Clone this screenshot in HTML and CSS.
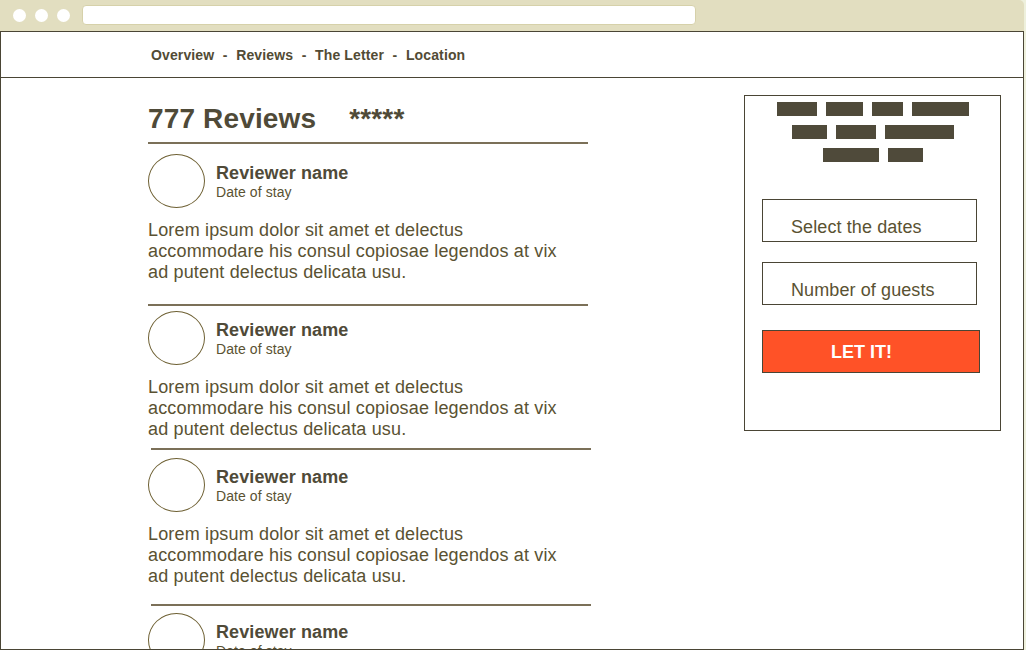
FILE: index.html
```html
<!DOCTYPE html>
<html lang="en">
<head>
<meta charset="utf-8">
<title>Reviews</title>
<link rel="stylesheet" href="styles.css">
</head>
<body>
<div class="window">
  <div class="chrome">
    <span class="dot"></span>
    <span class="dot"></span>
    <span class="dot"></span>
    <div class="url"></div>
  </div>
  <div class="frame">
    <nav class="nav">
      <span class="nav-item">Overview</span><span class="sep">-</span><span class="nav-item">Reviews</span><span class="sep">-</span><span class="nav-item">The Letter</span><span class="sep">-</span><span class="nav-item">Location</span>
    </nav>
    <div class="main">
      <section class="reviews">
        <h1 class="title">777 Reviews<span class="stars">*****</span></h1>

        <article class="review review-1">
          <div class="review-head">
            <div class="avatar"></div>
            <div class="who">
              <div class="name">Reviewer name</div>
              <div class="date">Date of stay</div>
            </div>
          </div>
          <p class="review-text">Lorem ipsum dolor sit amet et delectus accommodare his consul copiosae legendos at vix ad putent delectus delicata usu.</p>
          <hr class="divider">
        </article>

        <article class="review review-2">
          <div class="review-head">
            <div class="avatar"></div>
            <div class="who">
              <div class="name">Reviewer name</div>
              <div class="date">Date of stay</div>
            </div>
          </div>
          <p class="review-text">Lorem ipsum dolor sit amet et delectus accommodare his consul copiosae legendos at vix ad putent delectus delicata usu.</p>
          <hr class="divider divider-shift">
        </article>

        <article class="review review-3">
          <div class="review-head">
            <div class="avatar"></div>
            <div class="who">
              <div class="name">Reviewer name</div>
              <div class="date">Date of stay</div>
            </div>
          </div>
          <p class="review-text">Lorem ipsum dolor sit amet et delectus accommodare his consul copiosae legendos at vix ad putent delectus delicata usu.</p>
          <hr class="divider divider-shift">
        </article>

        <article class="review review-4">
          <div class="review-head">
            <div class="avatar"></div>
            <div class="who">
              <div class="name">Reviewer name</div>
              <div class="date">Date of stay</div>
            </div>
          </div>
          <p class="review-text">Lorem ipsum dolor sit amet et delectus accommodare his consul copiosae legendos at vix ad putent delectus delicata usu.</p>
        </article>
      </section>

      <aside class="booking">
        <div class="bars">
          <div class="bar-row"><span class="bar w40"></span><span class="bar w37"></span><span class="bar w31"></span><span class="bar w57"></span></div>
          <div class="bar-row"><span class="bar w35"></span><span class="bar w40"></span><span class="bar w69"></span></div>
          <div class="bar-row"><span class="bar w56"></span><span class="bar w35"></span></div>
        </div>
        <div class="field field-dates">Select the dates</div>
        <div class="field field-guests">Number of guests</div>
        <div class="cta">LET IT!</div>
      </aside>
    </div>
  </div>
</div>
</body>
</html>
```

FILE: styles.css
```css
* {
  box-sizing: border-box;
}

html, body {
  margin: 0;
  padding: 0;
}

body {
  background: #eef0dc;
  font-family: "Liberation Sans", Arial, sans-serif;
  width: 1026px;
  height: 650px;
  overflow: hidden;
}

.window {
  width: 1024px;
}

.chrome {
  height: 31px;
  background: #e2dec0;
  border-top-right-radius: 5px;
  display: flex;
  align-items: center;
  padding-left: 13px;
  gap: 9px;
}

.dot {
  width: 13px;
  height: 13px;
  border-radius: 50%;
  background: #ffffff;
  flex: none;
}

.url {
  width: 614px;
  height: 20px;
  margin-left: 3px;
  margin-top: -1px;
  background: #ffffff;
  border: 1px solid #d6d1aa;
  border-radius: 4px;
}

.frame {
  height: 619px;
  background: #ffffff;
  border: 1px solid #4a4535;
  overflow: hidden;
}

.nav {
  height: 46px;
  border-bottom: 1px solid #4a4535;
  display: flex;
  align-items: center;
  padding-left: 150px;
  padding-top: 1px;
  font-size: 14px;
  font-weight: bold;
  color: #524b35;
  line-height: 16px;
  letter-spacing: 0.12px;
}

.sep {
  padding: 0 8.6px;
}

.main {
  display: flex;
  align-items: flex-start;
  padding-left: 147px;
}

.reviews {
  width: 440px;
  flex: none;
}

.title {
  margin: 25px 0 0;
  padding-bottom: 7px;
  border-bottom: 2px solid #7b7058;
  font-size: 28px;
  line-height: 32px;
  font-weight: bold;
  color: #4f4a38;
  letter-spacing: 0.15px;
}

.stars {
  margin-left: 33px;
}

.review-head {
  display: flex;
  align-items: center;
  gap: 11px;
}

.avatar {
  width: 57px;
  height: 54px;
  border: 1px solid #6e6033;
  border-radius: 50%;
  flex: none;
}

.who {
  display: flex;
  flex-direction: column;
}

.name {
  font-size: 18px;
  line-height: 21px;
  font-weight: bold;
  color: #4f4a38;
  letter-spacing: 0.1px;
  position: relative;
  top: 1px;
}

.date {
  font-size: 14px;
  line-height: 18px;
  color: #5a5232;
  letter-spacing: 0.08px;
}

.review-text {
  margin: 12px 0 0;
  width: 422px;
  font-size: 18px;
  line-height: 21px;
  color: #5a5232;
  letter-spacing: 0.16px;
}

.divider {
  margin: 0;
  border: 0;
  height: 2px;
  width: 440px;
  background: #7b7058;
}

.divider-shift {
  margin-left: 3px;
}

.review-1 { padding-top: 10px; }
.review-1 .divider { margin-top: 21px; }

.review-2 { padding-top: 5px; }
.review-2 .divider { margin-top: 8px; }

.review-3 { padding-top: 8px; }
.review-3 .divider { margin-top: 17px; }

.review-4 { padding-top: 7px; }

.booking {
  margin-left: 156px;
  margin-top: 17px;
  width: 257px;
  border: 1px solid #4a4535;
  padding: 6px 0 57px 17px;
  flex: none;
}

.bars {
  display: flex;
  flex-direction: column;
  gap: 9px;
  margin-left: -17px;
  padding-left: 1px;
}

.bar-row {
  display: flex;
  justify-content: center;
  gap: 9px;
}

.bar {
  height: 14px;
  background: #4f4a3a;
}

.w31 { width: 31px; }
.w35 { width: 35px; }
.w37 { width: 37px; }
.w40 { width: 40px; }
.w56 { width: 56px; }
.w57 { width: 57px; }
.w69 { width: 69px; }

.field {
  width: 215px;
  height: 43px;
  border: 1px solid #4a4535;
  padding: 17px 0 0 28px;
  font-size: 18px;
  line-height: 21px;
  color: #5a5232;
  letter-spacing: 0.1px;
}

.field-dates {
  margin-top: 37px;
}

.field-guests {
  margin-top: 20px;
}

.cta {
  margin-top: 25px;
  width: 218px;
  height: 43px;
  background: #ff5227;
  border: 1px solid #4a4535;
  padding: 1px 0 0 68px;
  font-size: 18px;
  line-height: 41px;
  font-weight: bold;
  color: #ffffff;
}
```
